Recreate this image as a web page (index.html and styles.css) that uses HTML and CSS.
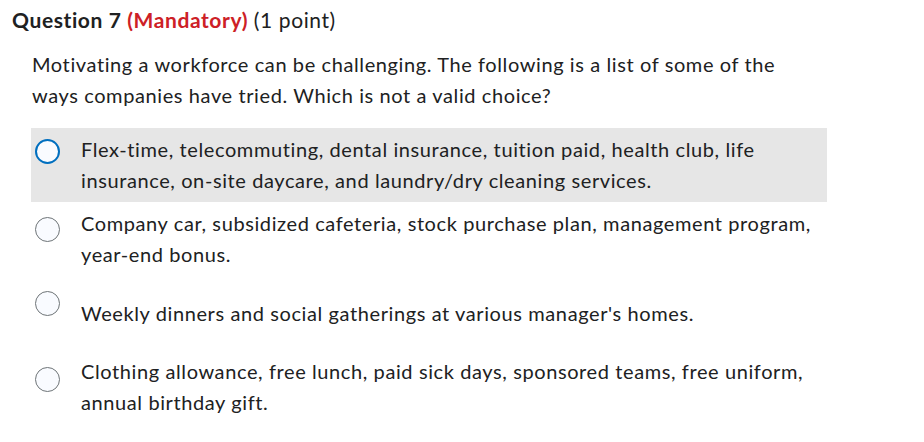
FILE: index.html
```html
<!DOCTYPE html>
<html lang="en">
<head>
<meta charset="utf-8">
<title>Question 7</title>
<link rel="stylesheet" href="styles.css">
</head>
<body>
<div class="question">
  <h2 class="q-title">Question 7 <span class="mandatory">(Mandatory)</span> <span class="points">(1 point)</span></h2>
  <div class="q-body">
    <p class="q-text">Motivating a workforce can be challenging. The following is a list of some of the ways companies have tried. Which is not a valid choice?</p>
    <div class="options">
      <label class="option option-hover">
        <span class="radio radio-focus"></span>
        <span class="opt-text">Flex-time, telecommuting, dental insurance, tuition paid, health club, life insurance, on-site daycare, and laundry/dry cleaning services.</span>
      </label>
      <label class="option">
        <span class="radio"></span>
        <span class="opt-text">Company car, subsidized cafeteria, stock purchase plan, management program, year-end bonus.</span>
      </label>
      <label class="option option-tall">
        <span class="radio"></span>
        <span class="opt-text">Weekly dinners and social gatherings at various manager's homes.</span>
      </label>
      <label class="option option-last">
        <span class="radio"></span>
        <span class="opt-text">Clothing allowance, free lunch, paid sick days, sponsored teams, free uniform, annual birthday gift.</span>
      </label>
    </div>
  </div>
</div>
</body>
</html>
```

FILE: styles.css
```css
html, body {
  margin: 0;
  padding: 0;
  background: #ffffff;
}
body {
  font-family: Lato, "Noto Sans", sans-serif;
  color: #202122;
  font-variant-ligatures: none;
}
.question {
  padding: 5px 0 0 12px;
}
.q-title {
  margin: 0;
  font-size: 21px;
  line-height: 30px;
  letter-spacing: 0.6px;
  font-weight: 700;
  color: #202122;
}
.mandatory {
  color: #cd2026;
}
.points {
  font-weight: 400;
}
.q-body {
  padding-left: 19px;
  width: 796px;
}
.q-text {
  margin: 14px 0 0 1px;
  font-size: 20px;
  line-height: 31px;
  letter-spacing: 0.6px;
  padding-right: 26px;
}
.options {
  margin-top: 17px;
  display: flex;
  flex-direction: column;
}
.option {
  display: flex;
  align-items: flex-start;
  gap: 21px;
  padding: 6px 4px 6px 4px;
  min-height: 62px;
}
.option-hover {
  background: #e6e6e6;
}
.option-tall {
  padding-top: 22px;
  min-height: 46px;
}
.radio {
  flex: 0 0 auto;
  box-sizing: border-box;
  width: 25px;
  height: 25px;
  margin-top: 9px;
  border-radius: 50%;
  border: 1px solid #6e7477;
  background: #f9fbff;
}
.option-tall .radio {
  margin-top: -7px;
}
.option-last .radio {
  margin-top: 11px;
}
.radio-focus {
  border: 2px solid #006fbf;
  background: #f9fbff;
  margin-top: 5px;
}
.opt-text {
  font-size: 20px;
  line-height: 31px;
  letter-spacing: 0.6px;
}
```
